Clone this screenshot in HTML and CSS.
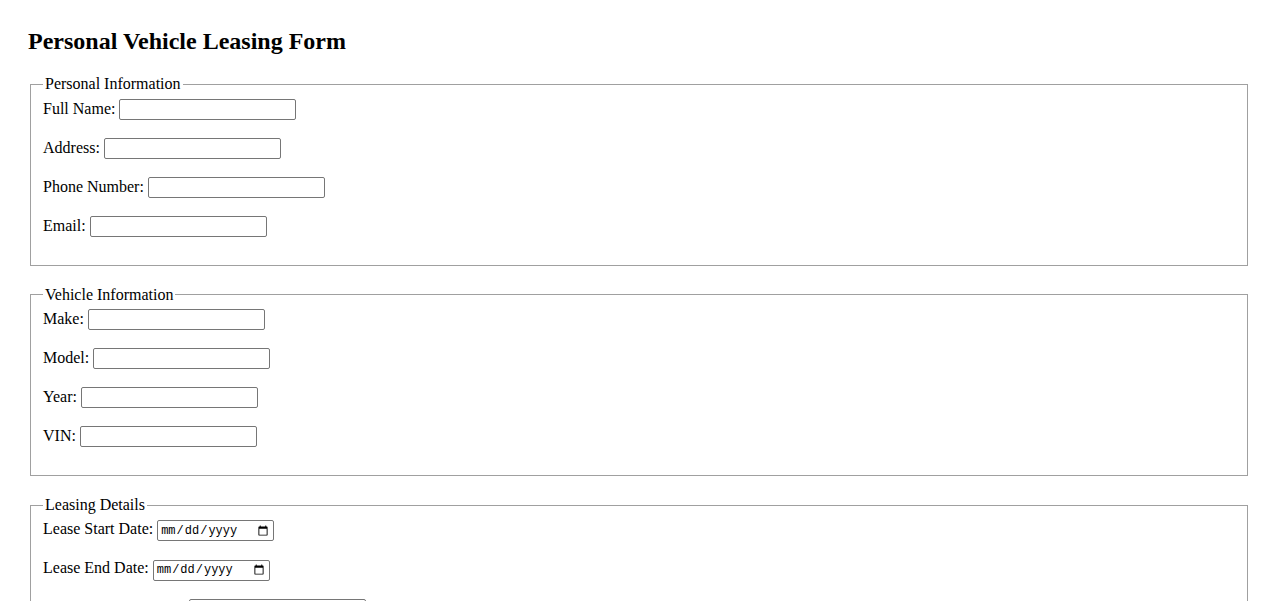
FILE: index.html
```html
<!DOCTYPE html>
<html lang="en">
<head>
<meta charset="utf-8">
<title>Personal Vehicle Leasing Form</title>
<link rel="stylesheet" href="styles.css">
</head>
<body class="page">
<h2 class="title">Personal Vehicle Leasing Form</h2>
<form class="lease-form">
  <fieldset class="group">
    <legend class="group-legend">Personal Information</legend>
    <label class="field-label" for="fullname">Full Name:</label> <input class="text-input" type="text" id="fullname"><br><br>
    <label class="field-label" for="address">Address:</label> <input class="text-input" type="text" id="address"><br><br>
    <label class="field-label" for="phone">Phone Number:</label> <input class="text-input" type="tel" id="phone"><br><br>
    <label class="field-label" for="email">Email:</label> <input class="text-input" type="email" id="email"><br><br>
  </fieldset>
  <fieldset class="group">
    <legend class="group-legend">Vehicle Information</legend>
    <label class="field-label" for="make">Make:</label> <input class="text-input" type="text" id="make"><br><br>
    <label class="field-label" for="model">Model:</label> <input class="text-input" type="text" id="model"><br><br>
    <label class="field-label" for="year">Year:</label> <input class="text-input" type="text" id="year"><br><br>
    <label class="field-label" for="vin">VIN:</label> <input class="text-input" type="text" id="vin"><br><br>
  </fieldset>
  <fieldset class="group">
    <legend class="group-legend">Leasing Details</legend>
    <label class="field-label" for="start">Lease Start Date:</label> <input class="date-input" type="date" id="start"><br><br>
    <label class="field-label" for="end">Lease End Date:</label> <input class="date-input" type="date" id="end"><br><br>
    <label class="field-label" for="payment">Monthly Payment ($):</label> <input class="text-input" type="text" id="payment"><br><br>
    <label class="field-label" for="deposit">Security Deposit ($):</label> <input class="text-input" type="text" id="deposit"><br><br>
  </fieldset>
</form>
</body>
</html>
```
FILE: styles.css
```css
.page {
  margin: 8px;
  padding: 20px;
  font-family: "Liberation Serif", "Times New Roman", serif;
  font-size: 16px;
  color: #000;
  background: #fff;
}

.title {
  margin: 0 0 20px 0;
  font-size: 24px;
  font-weight: bold;
}

.group {
  margin: 0 2px 20px 2px;
  border: 1px solid #a0a0a0;
  padding: 0.35em 0.75em 0.625em 0.75em;
}

.group-legend {
  padding: 0 2px;
}

.text-input {
  font-family: "Liberation Sans", Arial, sans-serif;
  font-size: 13.33px;
  width: 177px;
  height: 21px;
  box-sizing: border-box;
  padding: 1px 2px;
  border: 1px solid #767676;
  border-radius: 2px;
}

.date-input {
  font-family: "Liberation Mono", "Courier New", monospace;
  font-size: 12px;
  width: 117px;
  height: 21px;
  box-sizing: border-box;
  padding: 1px 2px;
  border: 1px solid #767676;
  border-radius: 2px;
}
```
